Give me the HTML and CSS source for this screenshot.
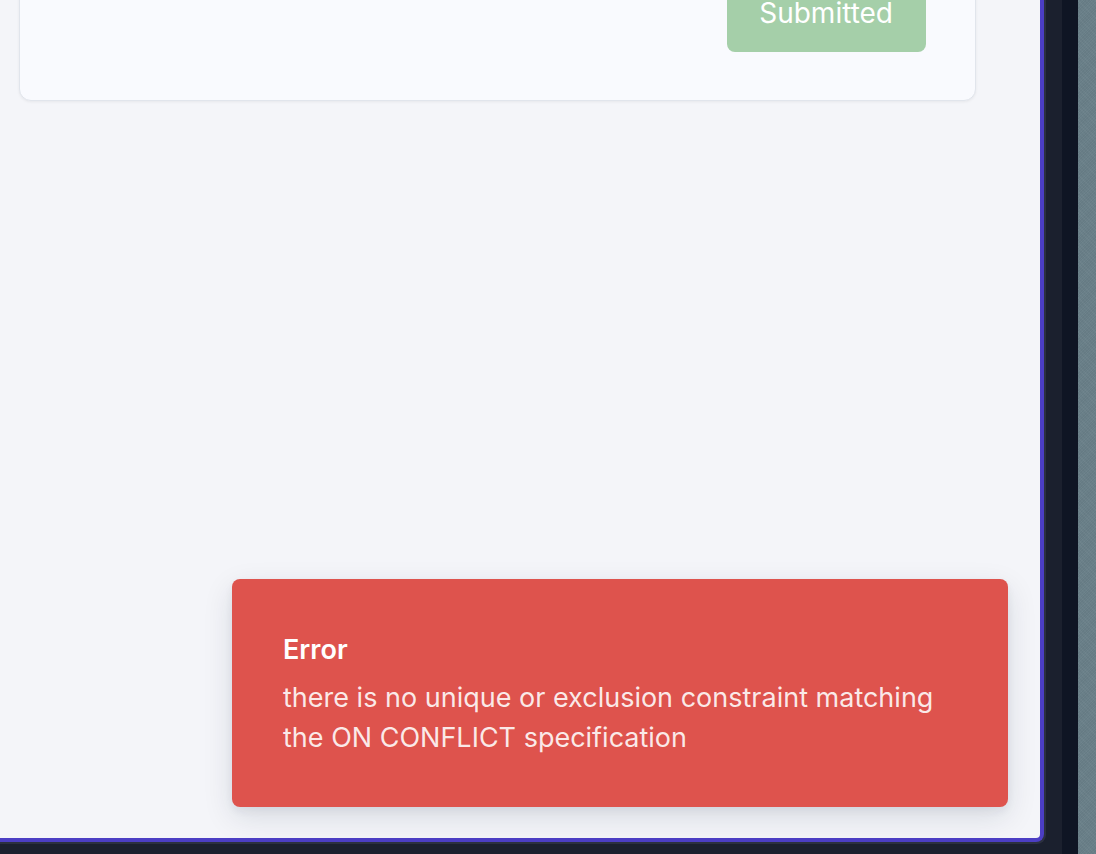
FILE: index.html
```html
<!DOCTYPE html>
<html>
<head>
<meta charset="utf-8">
<link rel="stylesheet" href="styles.css">
</head>
<body>
<div class="desktop">
  <div class="frame">
    <div class="stage">
      <div class="window">
        <div class="content">
          <div class="card">
            <div class="actions">
              <button class="btn-submitted" disabled>Submitted</button>
            </div>
          </div>
        </div>
        <div class="toast" role="alert">
          <div class="toast-title">Error</div>
          <div class="toast-msg">there is no unique or exclusion constraint matching the ON CONFLICT specification</div>
        </div>
      </div>
    </div>
    <div class="rail"></div>
  </div>
  <div class="wallpaper"></div>
</div>
</body>
</html>
```

FILE: styles.css
```css
* { box-sizing: border-box; }
html, body {
  margin: 0;
  padding: 0;
  width: 1096px;
  height: 854px;
  overflow: hidden;
  font-family: Inter, "Noto Sans", sans-serif;
}
.desktop {
  display: flex;
  width: 1096px;
  height: 854px;
}
.frame {
  display: flex;
  width: 1078px;
  height: 854px;
}
.stage {
  width: 1062px;
  height: 854px;
  background: #1b202e;
}
.rail {
  width: 16px;
  height: 854px;
  background: #0f1524;
}
.wallpaper {
  flex: 1;
  background-color: #6a8089;
  background-image:
    repeating-linear-gradient(45deg, rgba(255,255,255,0.03) 0 1px, transparent 1px 3px),
    repeating-linear-gradient(-45deg, rgba(0,0,0,0.04) 0 1px, transparent 1px 2px);
}
.window {
  position: relative;
  width: 1046px;
  height: 842px;
  margin-left: -2px;
  background: #f4f5f9;
  border-right: 4px solid #4c3ec4;
  border-bottom: 4px solid #4c3ec4;
  border-bottom-right-radius: 8px;
  box-shadow: 1px 1px 0 1px #2c3040;
  overflow: hidden;
}
.content {
  padding-left: 21px;
  width: 978px;
}
.card {
  margin-top: -75px;
  background: #f9fafe;
  border: 1px solid #e1e5ec;
  border-radius: 12px;
  box-shadow: 0 1px 3px rgba(0,0,0,0.06);
  padding: 48px;
}
.actions {
  display: flex;
  justify-content: flex-end;
}
.btn-submitted {
  font-family: Inter, "Noto Sans", sans-serif;
  font-size: 28px;
  line-height: 40px;
  color: #ffffff;
  background: #a5cfa9;
  border: none;
  border-radius: 8px;
  padding: 19px 33px 19px 32px;
  margin-right: 1px;
}
.toast {
  position: absolute;
  right: 32px;
  bottom: 31px;
  width: 776px;
  background: #de534d;
  border-radius: 8px;
  padding: 51px 50px 49px 51px;
  box-shadow: 0 10px 30px rgba(20, 30, 60, 0.12), 0 4px 8px rgba(20, 30, 60, 0.06);
  color: #ffffff;
}
.toast-title {
  font-size: 27px;
  font-weight: 600;
  line-height: 40px;
}
.toast-msg {
  margin-top: 8px;
  font-size: 27px;
  line-height: 40px;
  color: rgba(255, 255, 255, 0.88);
}
```
